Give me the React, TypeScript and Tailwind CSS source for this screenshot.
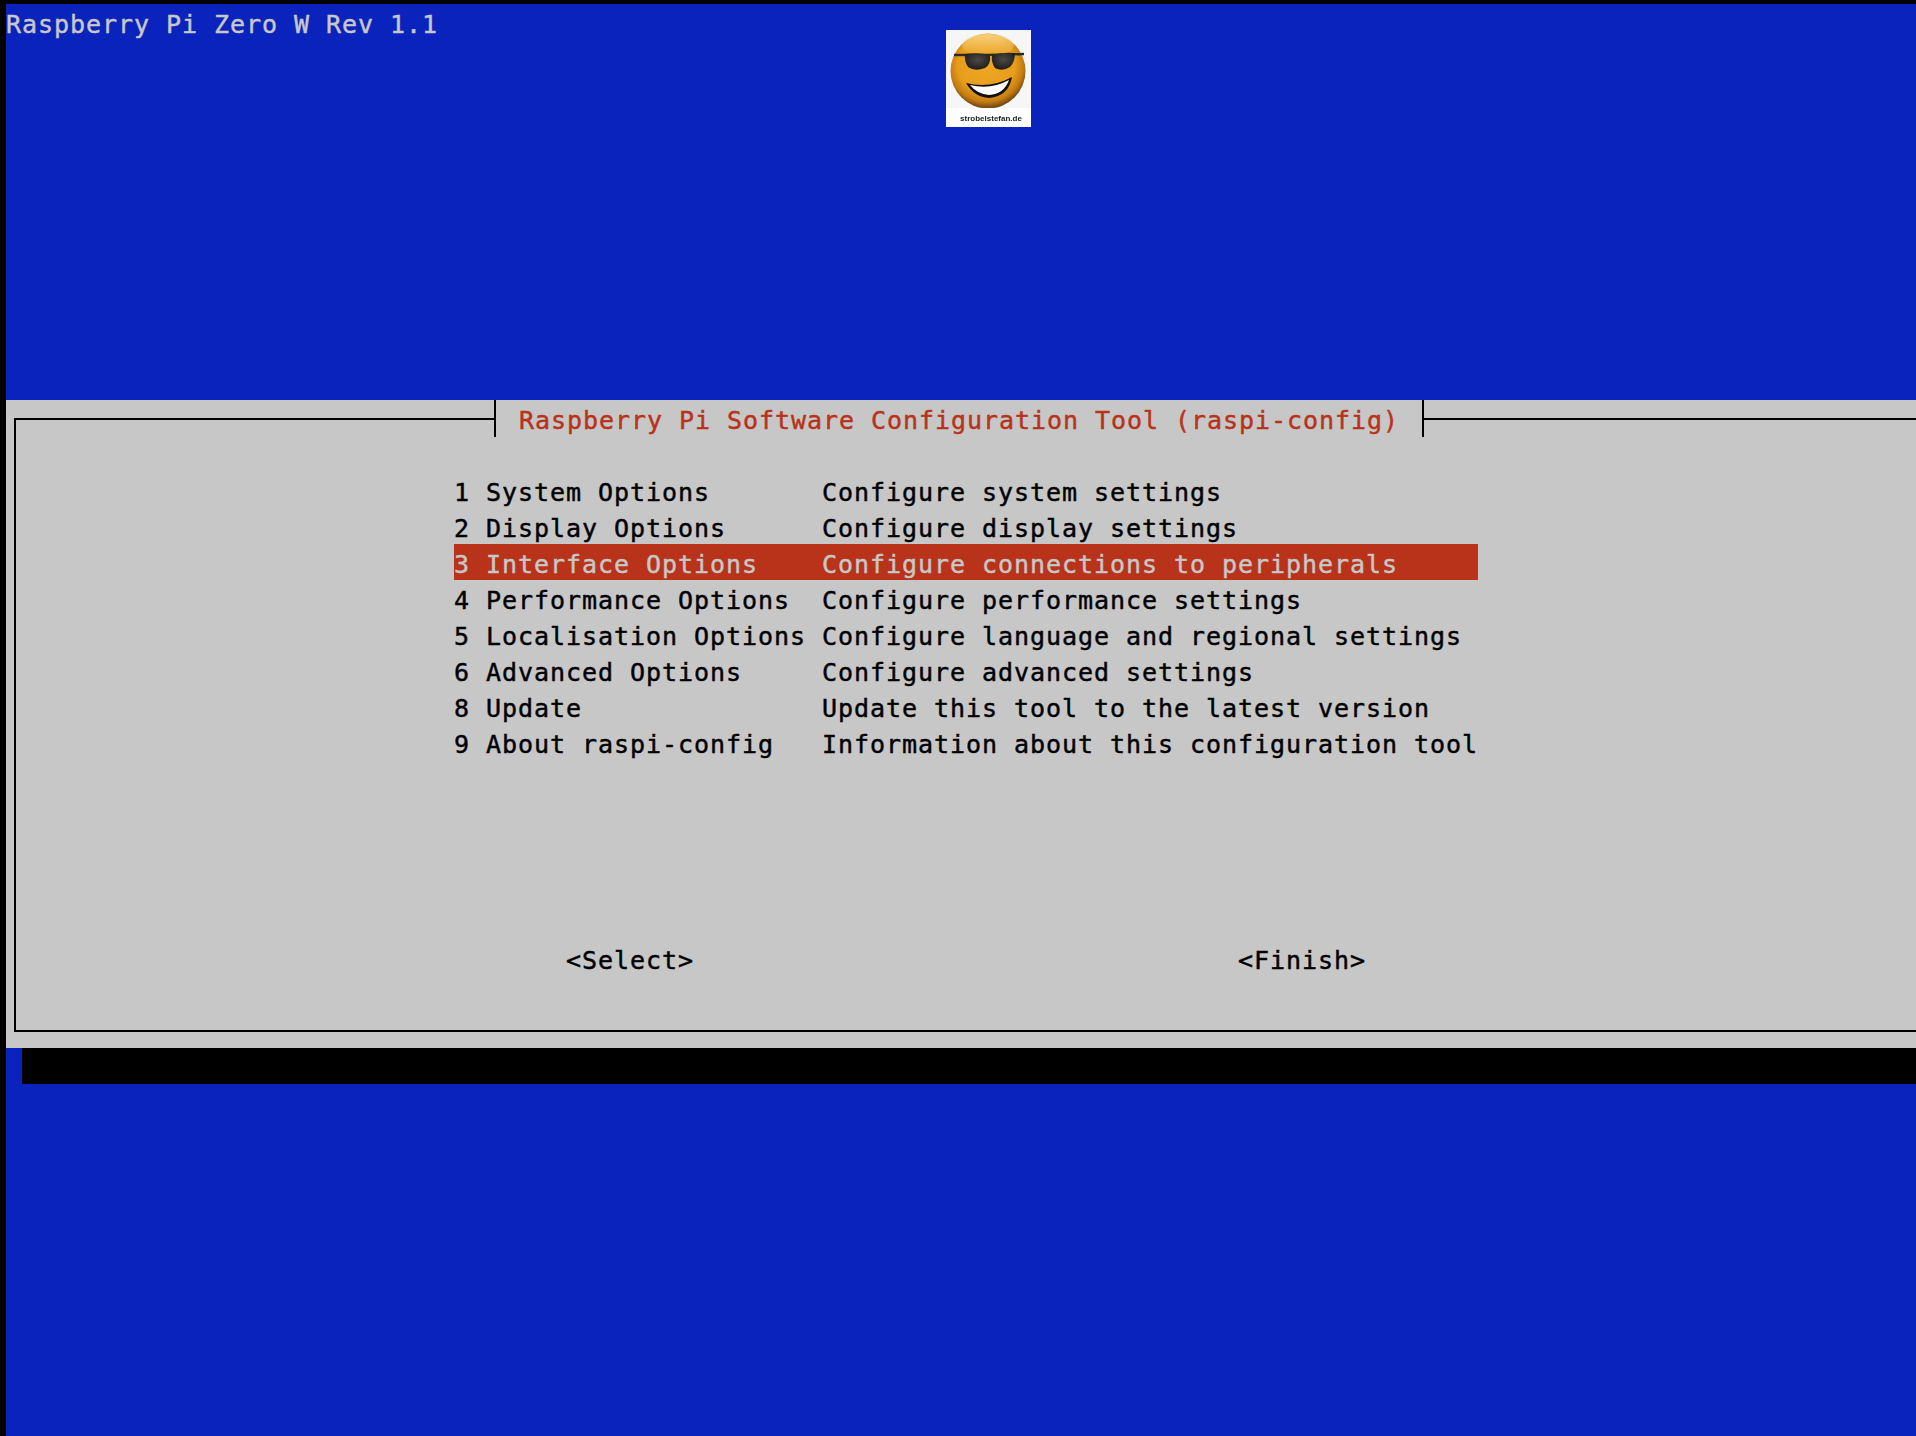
const menuItems = [
  ["1 System Options", "Configure system settings"],
  ["2 Display Options", "Configure display settings"],
  ["3 Interface Options", "Configure connections to peripherals"],
  ["4 Performance Options", "Configure performance settings"],
  ["5 Localisation Options", "Configure language and regional settings"],
  ["6 Advanced Options", "Configure advanced settings"],
  ["8 Update", "Update this tool to the latest version"],
  ["9 About raspi-config", "Information about this configuration tool"],
];

function Logo() {
  return (
    <div className="ml-[508px] mt-[26px] flex h-[97px] w-[85px] flex-col bg-white">
      <div className="h-[78px] w-[85px] bg-[#f6f6f6]">
        <svg viewBox="0 0 85 78" className="h-[78px] w-[85px] blur-[0.5px]">
          <defs>
            <radialGradient id="face" cx="48%" cy="42%" r="56%">
              <stop offset="0%" stopColor="#efa822" />
              <stop offset="68%" stopColor="#e79d1c" />
              <stop offset="88%" stopColor="#c47b12" />
              <stop offset="100%" stopColor="#7d5012" />
            </radialGradient>
            <linearGradient id="sheen" x1="0" y1="0" x2="0" y2="1">
              <stop offset="0%" stopColor="#ffe9a8" stopOpacity="0.7" />
              <stop offset="100%" stopColor="#ffe9a8" stopOpacity="0" />
            </linearGradient>
            <radialGradient id="lens" cx="50%" cy="40%" r="60%">
              <stop offset="0%" stopColor="#4c4a46" />
              <stop offset="100%" stopColor="#1f1d1b" />
            </radialGradient>
          </defs>
          <circle cx="42" cy="41" r="37.5" fill="url(#face)" />
          <ellipse cx="42" cy="15" rx="26" ry="11" fill="url(#sheen)" />
          <path d="M8 25 Q42 25 78 24" stroke="#2c2a28" strokeWidth="2.4" fill="none" />
          <path d="M19 24 Q33 22 44 25 Q45 35 39 38 Q29 42 22 37 Q18 31 19 24Z" fill="url(#lens)" />
          <path d="M46 25 Q57 22 69 23 Q69 32 64 37 Q56 42 49 38 Q45 33 46 25Z" fill="url(#lens)" />
          <path d="M20 53 Q44 59 66 47 Q63 66 43 68 Q28 67 20 53Z" fill="#141210" />
          <path d="M24 55 Q45 60 63 50 Q58 64 43 65 Q31 64 24 55Z" fill="#ffffff" />
        </svg>
      </div>
      <div className="mt-[6px] pl-[5px] text-center font-['Liberation_Sans',sans-serif] text-[8px] font-bold leading-[10px] tracking-normal text-[#222] blur-[0.3px] [-webkit-text-stroke:0]">
        strobelstefan.de
      </div>
    </div>
  );
}

export default function App() {
  return (
    <div className="h-[1436px] overflow-hidden bg-black pl-[6px] pt-[4px] font-['DejaVu_Sans_Mono',monospace] text-[25px] leading-[42px] tracking-[0.95px] whitespace-pre [-webkit-text-stroke:0.45px]">
      <div className="flex flex-col bg-[#0a23bd]">
        {/* top area with board name and logo */}
        <div className="flex h-[396px] items-start">
          <div className="w-[432px] text-[#c7c7c7]">Raspberry Pi Zero W Rev 1.1</div>
          <Logo />
        </div>

        {/* whiptail dialog */}
        <div className="h-[648px] bg-[#c7c7c7] pl-[8px] pt-[18px] text-black">
          <div className="h-[614px] border-2 border-r-0 border-black">
            <div className="-mt-[20px] ml-[478px] flex h-[37px] w-[930px] border-x-2 border-black bg-[#c7c7c7] pl-[23px] text-[#b9321a]">
              Raspberry Pi Software Configuration Tool (raspi-config)
            </div>
            <div className="ml-[438px] mt-[35px] flex w-[1024px] flex-col">
              {menuItems.map(([name, desc]) => (
                <div
                  key={name}
                  className={name.startsWith("3") ? "flex h-[36px] bg-[#b9321a] text-[#c7c7c7]" : "flex h-[36px]"}
                >
                  <span className="w-[368px]">{name}</span>
                  <span>{desc}</span>
                </div>
              ))}
            </div>
            <div className="ml-[550px] mt-[180px] flex">
              <span className="w-[672px]">{"<Select>"}</span>
              <span>{"<Finish>"}</span>
            </div>
          </div>
        </div>

        {/* dialog shadow */}
        <div className="ml-[16px] h-[36px] bg-black" />
        <div className="h-[352px]" />
      </div>
    </div>
  );
}
